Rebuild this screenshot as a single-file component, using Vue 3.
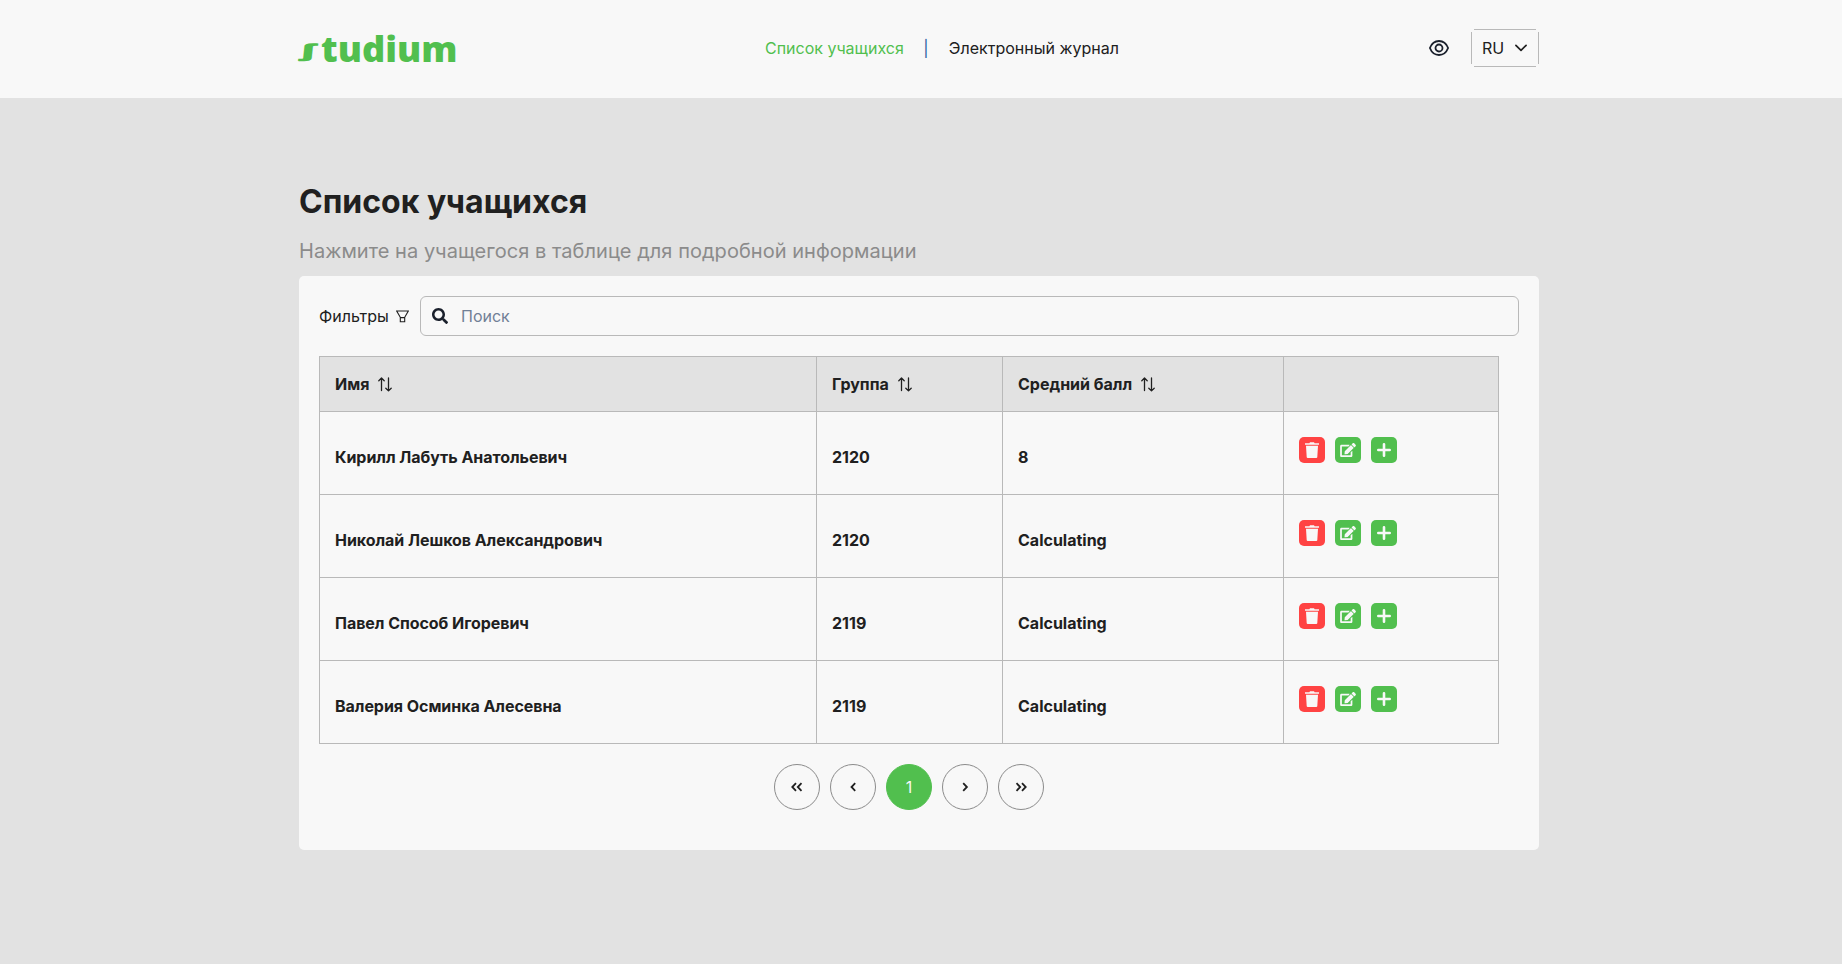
<script setup>
import { ref } from 'vue'

const columns = ['Имя', 'Группа', 'Средний балл']
const students = ref([
  { name: 'Кирилл Лабуть Анатольевич', group: '2120', score: '8' },
  { name: 'Николай Лешков Александрович', group: '2120', score: 'Calculating' },
  { name: 'Павел Способ Игоревич', group: '2119', score: 'Calculating' },
  { name: 'Валерия Осминка Алесевна', group: '2119', score: 'Calculating' },
])
</script>

<template>
  <div class="page">
    <header class="header">
      <div class="container header-row">
        <svg class="logo" width="160" height="34" viewBox="0 0 160 34" aria-label="studium">
          <text class="logo-s" transform="translate(0.6 26.4) skewX(-6) scale(1.9 0.69)">ʃ</text>
          <text class="logo-text" x="22" y="30.800" textLength="136.500" lengthAdjust="spacingAndGlyphs">tudium</text>
        </svg>
        <nav class="nav">
          <a class="active">Список учащихся</a>
          <span class="bar">|</span>
          <a>Электронный журнал</a>
        </nav>
        <div class="tools">
          <svg class="eye" width="20" height="16" viewBox="0 0 20 16" fill="none" stroke="#1a202c" stroke-width="1.800">
            <path d="M.9 8C2.7 3.400 6 1 10 1s7.300 2.400 9.100 7c-1.800 4.600-5.100 7-9.100 7S2.700 12.600.9 8z" />
            <circle cx="10" cy="8" r="3.500" />
          </svg>
          <button class="lang">
            <span>RU</span>
            <svg width="12" height="8" viewBox="0 0 12 8" fill="none" stroke="#202020" stroke-width="1.700" stroke-linecap="round" stroke-linejoin="round">
              <path d="M.9 1.300L6 6.400l5.100-5.100" />
            </svg>
          </button>
        </div>
      </div>
    </header>

    <main class="container main">
      <h1>Список учащихся</h1>
      <p class="hint">Нажмите на учащегося в таблице для подробной информации</p>

      <section class="card">
        <div class="filters">
          <span class="filter-label">Фильтры</span>
          <svg class="funnel" width="13" height="13" viewBox="0 0 13 13" fill="none" stroke="#202020" stroke-width="1.100">
            <path d="M.7 1h11.600L8.700 7.300v4.400H4.300V7.300zM4.300 7.600h4.400" />
          </svg>
          <label class="search">
            <svg width="16" height="16" viewBox="0 0 512 512" fill="#1a202c">
              <path d="M505 442.700L405.300 343c-4.500-4.500-10.600-7-17-7H372c27.600-35.300 44-79.700 44-128C416 93.100 322.900 0 208 0S0 93.100 0 208s93.100 208 208 208c48.300 0 92.700-16.400 128-44v16.300c0 6.400 2.500 12.500 7 17l99.700 99.700c9.400 9.400 24.600 9.400 33.900 0l28.300-28.300c9.400-9.400 9.400-24.600.1-34zM208 336c-70.700 0-128-57.200-128-128 0-70.700 57.200-128 128-128 70.700 0 128 57.200 128 128 0 70.700-57.200 128-128 128z" />
            </svg>
            <input type="text" placeholder="Поиск" />
          </label>
        </div>

        <div class="table">
          <div class="row head">
            <div v-for="c in columns" :key="c" class="cell">
              <span>{{ c }}</span>
              <svg class="sort" width="14" height="15" viewBox="0 0 14 15" fill="none" stroke="#202020" stroke-width="1.300" stroke-linecap="round" stroke-linejoin="round">
                <path d="M3.500 13.500V1.200M.8 3.700l2.700-2.700 2.700 2.700M10.500 1v12.500M7.800 11.200l2.700 2.700 2.700-2.700" />
              </svg>
            </div>
            <div class="cell"></div>
          </div>
          <div v-for="s in students" :key="s.name" class="row body">
            <div class="cell name">{{ s.name }}</div>
            <div class="cell">{{ s.group }}</div>
            <div class="cell">{{ s.score }}</div>
            <div class="cell actions">
              <button class="act danger">
                <svg width="14" height="16" viewBox="0 0 14 16" fill="#f8f8f8">
                  <path d="M0 1.300h4.400L5 .2h4l.6 1.100H14v1.500H0zM1 3.800h12l-.7 11.100a1.100 1.100 0 0 1-1.100 1.100H2.800a1.100 1.100 0 0 1-1.100-1.100z" />
                </svg>
              </button>
              <button class="act">
                <svg width="16" height="14" viewBox="0 0 576 512" fill="#f8f8f8">
                  <path d="M402.600 83.200l90.200 90.200c3.800 3.800 3.800 10 0 13.800L274.400 405.600l-92.800 10.300c-12.400 1.400-22.900-9.100-21.500-21.500l10.300-92.800L388.800 83.200c3.800-3.800 10-3.800 13.800 0zm162-22.900l-48.800-48.800c-15.200-15.200-39.900-15.200-55.200 0l-35.400 35.400c-3.800 3.800-3.800 10 0 13.800l90.200 90.200c3.800 3.800 10 3.800 13.800 0l35.400-35.400c15.200-15.300 15.200-40 0-55.200zM384 346.200V448H64V128h229.800c3.200 0 6.200-1.300 8.500-3.500l40-40c7.600-7.600 2.200-20.500-8.500-20.500H48C21.500 64 0 85.500 0 112v352c0 26.500 21.500 48 48 48h352c26.500 0 48-21.500 48-48V306.200c0-10.700-12.900-16-20.500-8.500l-40 40c-2.200 2.300-3.500 5.300-3.500 8.500z" />
                </svg>
              </button>
              <button class="act">
                <svg width="14" height="14" viewBox="0 0 14 14" stroke="#f8f8f8" stroke-width="2.600" stroke-linecap="round">
                  <path d="M7 1.300v11.400M1.300 7h11.400" />
                </svg>
              </button>
            </div>
          </div>
        </div>

        <div class="pager">
          <button><svg width="12" height="10" viewBox="0 0 12 10"><path d="M5 1.200L1.300 5 5 8.800M10.500 1.200L6.800 5l3.700 3.800" /></svg></button>
          <button><svg width="12" height="10" viewBox="0 0 12 10"><path d="M8.200 1.200L4.500 5l3.700 3.800" /></svg></button>
          <button class="current">1</button>
          <button><svg width="12" height="10" viewBox="0 0 12 10"><path d="M4.200 1.200L7.900 5 4.200 8.800" /></svg></button>
          <button><svg width="12" height="10" viewBox="0 0 12 10"><path d="M1.500 1.200L5.200 5 1.500 8.800M7 1.200L10.700 5 7 8.800" /></svg></button>
        </div>
      </section>
    </main>
  </div>
</template>

<style>
body {
  background: #e2e2e2;
}
</style>

<style scoped>
.page {
  min-height: 964px;
  background: #e2e2e2;
  color: #202020;
  font-family: Inter, sans-serif;
  font-size: 16px;
  line-height: 24px;
}
* {
  box-sizing: border-box;
}
button {
  font: inherit;
  color: inherit;
  background: none;
  border: 0;
  padding: 0;
}
svg {
  display: block;
  flex: none;
}
.container {
  width: 1240px;
  margin-left: 299px;
}
.header {
  height: 98px;
  background: #f8f8f8;
}
.header-row {
  height: 96px;
  display: grid;
  grid-template-columns: 466px 1fr auto;
  align-items: center;
}
.logo {
  fill: #51bf4e;
  overflow: visible;
}
.logo-s {
  font: 800 26px "Noto Sans", sans-serif;
}
.logo-text {
  font: 800 36px "Open Sans", sans-serif;
}
.nav {
  display: flex;
}
.active {
  color: #51bf4e;
}
.bar {
  width: 6px;
  margin: 0 20px 0 19px;
  text-align: center;
  color: #2b5c9e;
}
.tools {
  display: flex;
  align-items: center;
}
.lang {
  width: 68px;
  height: 38px;
  margin-left: 22px;
  padding: 0 12px 0 11px;
  display: flex;
  align-items: center;
  justify-content: space-between;
  background:
    linear-gradient(#b9b9b9, #b9b9b9) center top / 62px 1px no-repeat,
    linear-gradient(#b9b9b9, #b9b9b9) center bottom / 62px 1px no-repeat,
    linear-gradient(#b9b9b9, #b9b9b9) left center / 1px 32px no-repeat,
    linear-gradient(#b9b9b9, #b9b9b9) right center / 1px 32px no-repeat;
}
.main {
  padding-top: 80px;
}
h1 {
  margin: 0;
  font-size: 32px;
  line-height: 48px;
  font-weight: 700;
}
.hint {
  margin: 10px 0;
  font-size: 20px;
  line-height: 30px;
  letter-spacing: 0.04px;
  color: #8b8b8b;
}
.card {
  height: 574px;
  padding: 20px;
  background: #f8f8f8;
  border-radius: 5px;
}
.filters {
  display: flex;
  align-items: center;
  height: 40px;
}
.filter-label {
  width: 76.500px;
}
.search {
  flex: 1;
  height: 40px;
  margin-left: 11.500px;
  padding-left: 11px;
  display: flex;
  align-items: center;
  gap: 13px;
  border: 1px solid #b9b9b9;
  border-radius: 6px;
}
.search input {
  flex: 1;
  border: 0;
  padding: 0;
  outline: 0;
  background: none;
  font: inherit;
}
.search input::placeholder {
  color: #718096;
  opacity: 1;
}
.table {
  width: 1180px;
  margin-top: 20px;
  border: solid #b9b9b9;
  border-width: 1px 0 0 1px;
  font-weight: 700;
}
.row {
  display: grid;
  grid-template-columns: 497px 186px 281px 215px;
}
.cell {
  display: flex;
  align-items: center;
  padding: 0 15px;
  border: solid #b9b9b9;
  border-width: 0 1px 1px 0;
}
.head {
  height: 55px;
  background: #e2e2e2;
}
.sort {
  margin-left: 9px;
}
.body {
  height: 83px;
}
.body .cell {
  padding-top: 8px;
}
.name {
  letter-spacing: -0.05px;
}
.body .actions {
  align-items: flex-start;
  padding-top: 25px;
  gap: 10px;
}
.act {
  width: 26px;
  height: 26px;
  display: flex;
  align-items: center;
  justify-content: center;
  border-radius: 5px;
  background: #51bf4e;
}
.danger {
  background: #ff4343;
}
.pager {
  width: 1180px;
  margin-top: 20px;
  display: flex;
  justify-content: center;
  gap: 10px;
}
.pager button {
  width: 46px;
  height: 46px;
  display: flex;
  align-items: center;
  justify-content: center;
  border: 1px solid #8b8b8b;
  border-radius: 50%;
}
.pager .current {
  background: #51bf4e;
  border-color: #51bf4e;
  color: #f8f8f8;
}
.pager svg {
  fill: none;
  stroke: #202020;
  stroke-width: 1.8;
}
</style>
